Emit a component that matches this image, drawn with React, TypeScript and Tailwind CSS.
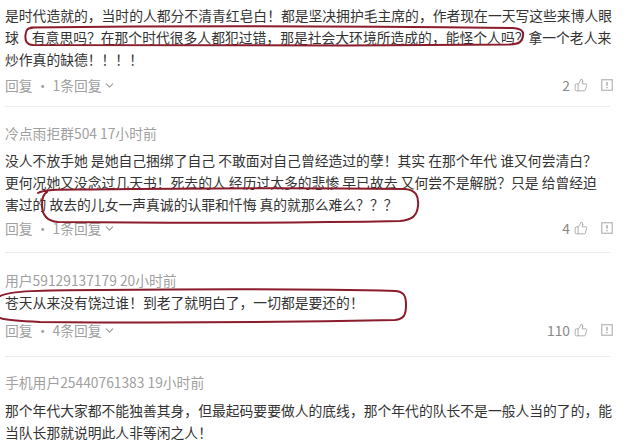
import { ThumbsUp, ChevronDown } from "lucide-react"

function ReplyRow({ replies, likes }: { replies: number; likes: string }) {
  return (
    <div className="flex items-center justify-between pr-[27px] text-[#a0a0a0]">
      <div className="flex items-center">
        回复 · {replies}条回复
        <ChevronDown className="ml-[1px] h-[13px] w-[13px]" strokeWidth={2.2} />
      </div>
      <div className="flex items-center">
        <span className="text-[#888]">{likes}</span>
        <ThumbsUp className="ml-[4px] h-[14px] w-[14px] text-[#aaa]" strokeWidth={1.6} />
        <svg className="ml-[13px] h-[12px] w-[12px]" viewBox="0 0 12 12">
          <rect x="0.75" y="0.75" width="10.5" height="10.5" fill="none" stroke="#b5b5b5" strokeWidth="1.2" />
          <line x1="6" y1="3" x2="6" y2="6.8" stroke="#999" strokeWidth="1.2" />
          <rect x="5.4" y="8" width="1.2" height="1.2" fill="#999" />
        </svg>
      </div>
    </div>
  )
}

function Divider() {
  return <div className="mr-[30px] h-px bg-[#ececec]" />
}

export default function App() {
  return (
    <div className="relative h-[443px] w-[640px] overflow-hidden bg-white font-['Noto_Sans_CJK_SC',sans-serif] text-[13.8px] leading-[22px] text-[#333]">
      <div className="pl-[5px]">
        {/* 评论 1（上半截被截掉） */}
        <div className="pt-[4px]">
          <div className="whitespace-nowrap">是时代造就的，当时的人都分不清青红皂白！都是坚决拥护毛主席的，作者现在一天写这些来博人眼</div>
          <div className="whitespace-nowrap">
            球<span className="ml-[13px]">有意思吗？在那个时代很多人都犯过错，那是社会大环境所造成的，能怪个人吗？</span>拿一个老人来
          </div>
          <div className="whitespace-nowrap">炒作真的缺德！！！！</div>
          <div className="mt-[4px] pb-[10px]">
            <ReplyRow replies={1} likes="2" />
          </div>
        </div>
        <Divider />

        {/* 评论 2 */}
        <div className="pt-[15px] pb-[13px]">
          <div className="whitespace-nowrap text-[#a0a0a0]">冷点雨拒群504 17小时前</div>
          <div className="mt-[5px] whitespace-nowrap">没人不放手她 是她自己捆绑了自己 不敢面对自己曾经造过的孽！其实 在那个年代 谁又何尝清白？</div>
          <div className="whitespace-nowrap">更何况她又没念过几天书！死去的人 经历过太多的悲惨 早已故去 又何尝不是解脱？只是 给曾经迫</div>
          <div className="whitespace-nowrap">害过的 故去的儿女一声真诚的认罪和忏悔 真的就那么难么？？？</div>
          <div className="mt-[2px]">
            <ReplyRow replies={1} likes="4" />
          </div>
        </div>
        <Divider />

        {/* 评论 3 */}
        <div className="pt-[16px] pb-[15px]">
          <div className="whitespace-nowrap text-[#a0a0a0]">用户59129137179 20小时前</div>
          <div className="whitespace-nowrap">苍天从来没有饶过谁！到老了就明白了，一切都是要还的！</div>
          <div className="mt-[6px]">
            <ReplyRow replies={4} likes="110" />
          </div>
        </div>
        <Divider />

        {/* 评论 4 */}
        <div className="pt-[14px]">
          <div className="whitespace-nowrap text-[#a0a0a0]">手机用户25440761383 19小时前</div>
          <div className="mt-[6px] whitespace-nowrap">那个年代大家都不能独善其身，但最起码要要做人的底线，那个年代的队长不是一般人当的了的，能</div>
          <div className="whitespace-nowrap">当队长那就说明此人非等闲之人！</div>
        </div>
      </div>

      {/* 手画的红圈标注 */}
      <svg
        className="pointer-events-none absolute left-0 top-0"
        width="640"
        height="443"
        viewBox="0 0 640 443"
        fill="none"
        stroke="#8a1c2c"
        strokeWidth="2"
        strokeLinecap="round"
        strokeLinejoin="round"
      >
        <path d="M31 27.5 C150 26 350 26 512 28 C521 28.5 524 31 523 36 C522 42 519 44 510 44.5 C350 46 150 46 33 45 C26 44.5 25 40 25.5 35 C26 30 27 28 33 27.8" />
        <path d="M38 193 C44 189 60 189.5 90 189.5 C200 188 300 187.5 405 189 C416 190 419 196 418 206 C417 216 412 220 400 221 C300 223 150 223 58 222 C46 221 42 214 42 205 C42 198 43 194 47 192" />
        <path d="M0 296 C10 291 40 290 100 290 C200 289 320 289 396 291 C404 292 406 296 406 305 C406 315 404 319 395 320 C300 322 150 323 40 322 C15 321 5 320 0 318" />
      </svg>
    </div>
  )
}
